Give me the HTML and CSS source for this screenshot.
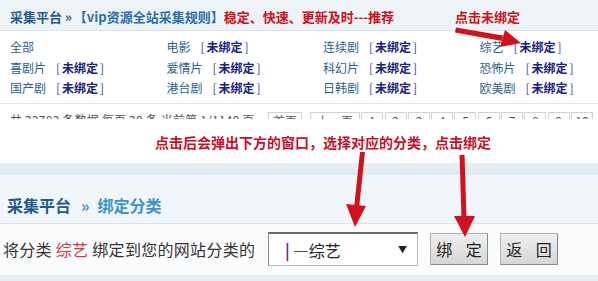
FILE: index.html
```html
<!DOCTYPE html>
<html lang="zh-CN">
<head>
<meta charset="utf-8">
<title>采集平台</title>
<link rel="stylesheet" href="styles.css">
</head>
<body>
<div class="page">
  <section class="top">
    <div class="top-head">
      <span class="crumb">采集平台 »</span><span class="rule">【vip资源全站采集规则】</span><span class="hot">稳定、快速、更新及时---推荐</span>
    </div>
    <div class="cats">
      <div class="cat">全部</div>
      <div class="cat">电影<span class="bind">[<b>未绑定</b>]</span></div>
      <div class="cat">连续剧<span class="bind">[<b>未绑定</b>]</span></div>
      <div class="cat">综艺<span class="bind">[<b>未绑定</b>]</span></div>
      <div class="cat">喜剧片<span class="bind">[<b>未绑定</b>]</span></div>
      <div class="cat">爱情片<span class="bind">[<b>未绑定</b>]</span></div>
      <div class="cat">科幻片<span class="bind">[<b>未绑定</b>]</span></div>
      <div class="cat">恐怖片<span class="bind">[<b>未绑定</b>]</span></div>
      <div class="cat">国产剧<span class="bind">[<b>未绑定</b>]</span></div>
      <div class="cat">港台剧<span class="bind">[<b>未绑定</b>]</span></div>
      <div class="cat">日韩剧<span class="bind">[<b>未绑定</b>]</span></div>
      <div class="cat">欧美剧<span class="bind">[<b>未绑定</b>]</span></div>
    </div>
    <div class="pager">
      <span class="pinfo">共 22783 条数据 每页 20 条 当前第 1/1140 页</span>
      <span class="pbox wide">首页</span>
      <span class="pbox wide2">上一页</span>
      <span class="pbox">1</span><span class="pbox">2</span><span class="pbox">3</span><span class="pbox">4</span><span class="pbox">5</span><span class="pbox">6</span><span class="pbox">7</span><span class="pbox">8</span><span class="pbox">9</span><span class="pbox">10</span>
    </div>
  </section>

  <p class="note">点击后会弹出下方的窗口，选择对应的分类，点击绑定</p>

  <section class="bind-panel">
    <div class="band"></div>
    <div class="bhead"><span class="crumb2">采集平台</span><span class="sub"><span class="raq">»</span>绑定分类</span></div>
    <div class="brow">
      <span class="label">将分类 <em>综艺</em> 绑定到您的网站分类的</span>
      <div class="select"><span class="bar">|</span>—综艺<span class="caret">▼</span></div>
      <button class="btn">绑 定</button>
      <button class="btn">返 回</button>
    </div>
    <div class="band2"></div>
  </section>

  <span class="tip">点击未绑定</span>
  <svg class="arrows" width="598" height="281" viewBox="0 0 598 281" aria-hidden="true">
    <g fill="#d3111c" stroke="none">
      <path d="M456 27.5 L503 35.5 L502 41 L455 32.5 Z"/>
      <polygon points="505,30 521,43 500,47"/>
      <path d="M360 152 L365 152 L359 208 L354 208 Z"/>
      <polygon points="346,204 366,206 355,227"/>
      <path d="M459.5 155 L464.5 155 L466.5 218 L461.5 218 Z"/>
      <polygon points="454,216 475,216 465,237"/>
    </g>
  </svg>
</div>
</body>
</html>
```
FILE: styles.css
```css
* { box-sizing: border-box; }
html, body { margin: 0; padding: 0; }
body {
  width: 598px;
  height: 281px;
  overflow: hidden;
  background: #fff;
  font-family: "Noto Sans CJK SC", "Noto Sans", "Liberation Sans", sans-serif;
  color: #333;
}
.page { position: relative; width: 598px; height: 281px; overflow: hidden; }

.top-head {
  height: 31px;
  padding: 6px 0 0 10px;
  line-height: 22px;
  font-size: 13px;
  font-weight: bold;
  background: #eef3f7;
  border-bottom: 1px solid #dbe4ec;
  white-space: nowrap;
}
.crumb { color: #245a86; }
.rule { color: #2a6ea8; margin-left: 2px; }
.hot { color: #d0101a; }

.cats {
  display: grid;
  grid-template-columns: repeat(4, 156.5px);
  grid-auto-rows: 20.5px;
  padding: 6px 0 4px 10px;
  width: 640px;
  border-bottom: 1px solid #e3e9ef;
  font-size: 12px;
  line-height: 20.5px;
  color: #2c5f8c;
  white-space: nowrap;
}
.bind { color: #3a4f9a; margin-left: 10px; }
.bind b { color: #1a237e; font-weight: bold; margin: 0 2px; }

.pager {
  height: 15px;
  overflow: hidden;
  padding: 8.5px 0 0 10px;
  display: flex;
  align-items: flex-start;
  font-size: 12px;
  line-height: 16px;
  color: #555;
  white-space: nowrap;
}
.pinfo { width: 258px; letter-spacing: 0.2px; }
.pbox {
  display: inline-block;
  min-width: 22px;
  text-align: center;
  border: 1px solid #ccd3da;
  margin-right: 1.3px;
  padding: 0 3px;
}
.pbox.wide { width: 34px; margin-right: 8px; }
.pbox.wide2 { width: 50px; }

.note {
  margin: 13px 0 11px 0;
  padding-left: 155px;
  font-size: 14px;
  line-height: 20px;
  font-weight: bold;
  color: #c8102a;
  white-space: nowrap;
}

.band {
  height: 12px;
  background: linear-gradient(#e9f0f6, #dfe9f2);
}
.bhead {
  height: 49px;
  padding: 19px 0 0 7px;
  line-height: 22px;
  font-size: 16px;
  font-weight: bold;
  background: #f1f6fa;
  border-bottom: 1px solid #dbe5ee;
  white-space: nowrap;
}
.crumb2 { color: #1f5a8a; }
.sub { color: #3a94c8; }
.raq { margin: 0 8px 0 10px; }

.brow {
  height: 51px;
  display: flex;
  align-items: center;
  padding: 0 0 0 3px;
  background: #fbfcfd;
  font-size: 16px;
  white-space: nowrap;
}
.label { width: 265px; color: #333; letter-spacing: 0.3px; }
.label em { font-style: normal; color: #d9363e; }
.select {
  position: relative;
  width: 150px;
  height: 34px;
  padding-left: 16px;
  line-height: 32px;
  font-size: 16px;
  color: #222;
  background: #fff;
  border: 1px solid #b8b8b8;
  border-top: 2px solid #6a6a6a;
  border-left: 1px solid #8a8a8a;
}
.bar { color: #6b2c91; font-weight: bold; margin-right: 3px; }
.caret {
  position: absolute;
  right: 10px;
  top: 0;
  font-size: 9px;
  color: #222;
}
.btn {
  width: 58px;
  height: 32px;
  margin-left: 12px;
  padding: 0 0 0 5px;
  font-family: "Noto Sans CJK SC", sans-serif;
  font-size: 16px;
  letter-spacing: 5px;
  color: #222;
  background: linear-gradient(#efefef, #d6d6d6);
  border: 1px solid #b0b0b0;
  border-right-color: #8a8a8a;
  border-bottom-color: #8a8a8a;
  border-radius: 1px;
}
.band2 { height: 6px; background: #e6eef7; }

.tip {
  position: absolute;
  left: 455px;
  top: 7px;
  font-size: 13px;
  line-height: 20px;
  font-weight: bold;
  color: #d0101a;
  white-space: nowrap;
}
.arrows { position: absolute; left: 0; top: 0; pointer-events: none; }
```
